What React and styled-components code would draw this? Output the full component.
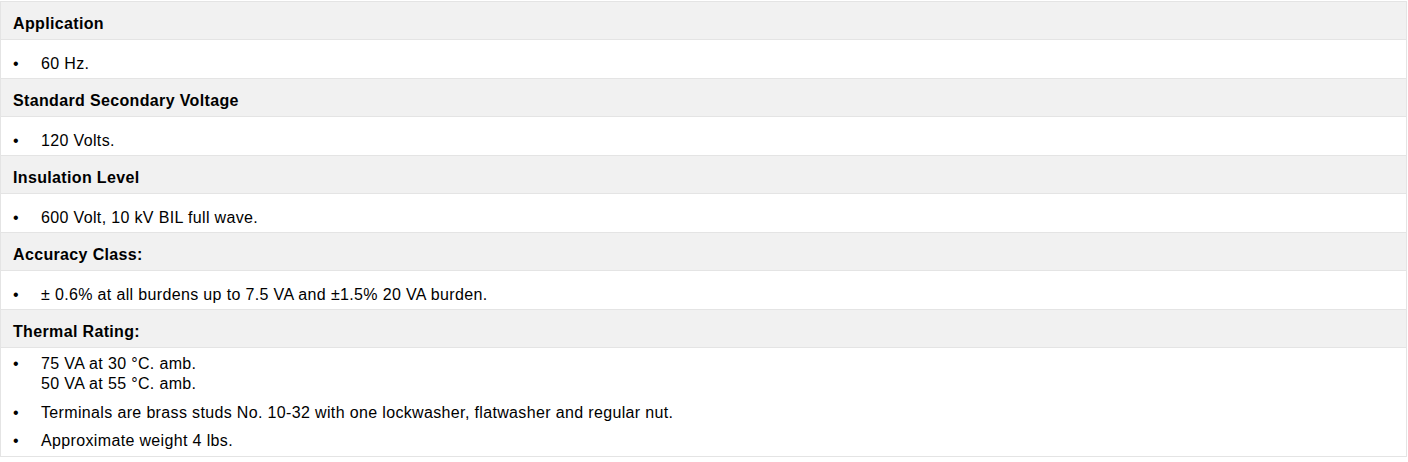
import styled, { createGlobalStyle } from "styled-components";

const GlobalStyle = createGlobalStyle`
  html, body {
    margin: 0;
    padding: 0;
    background: #fff;
  }
  body {
    font-family: "Liberation Sans", Arial, sans-serif;
    color: #000;
  }
`;

const SpecTable = styled.div`
  width: 1407px;
  margin-top: 1px;
  box-sizing: border-box;
  border: 1px solid #e4e4e4;
  border-bottom: 0;
  font-size: 16px;
  letter-spacing: 0.35px;
  line-height: 20px;
`;

const HeadRow = styled.div`
  box-sizing: border-box;
  height: 38px;
  padding: 12px 12px 0;
  background: #f1f1f1;
  border-bottom: 1px solid #e4e4e4;
  font-weight: 700;
`;

const BodyRow = styled.div`
  box-sizing: border-box;
  min-height: 39px;
  padding: ${(props) => (props.multi ? "6px 12px 5px" : "14px 12px 4px")};
  border-bottom: 1px solid #e4e4e4;
  background: #fff;
`;

const List = styled.ul`
  list-style: none;
  margin: 0;
  padding: 0;
  display: flex;
  flex-direction: column;
  gap: 8.5px;
`;

const Item = styled.li`
  position: relative;
  padding-left: 28px;
  &::before {
    content: "•";
    position: absolute;
    left: 0;
    top: 0;
  }
`;

const specs = [
  { title: "Application", items: [["60 Hz."]] },
  { title: "Standard Secondary Voltage", items: [["120 Volts."]] },
  { title: "Insulation Level", items: [["600 Volt, 10 kV BIL full wave."]] },
  {
    title: "Accuracy Class:",
    items: [["± 0.6% at all burdens up to 7.5 VA and ±1.5% 20 VA burden."]],
  },
  {
    title: "Thermal Rating:",
    items: [
      ["75 VA at 30 °C. amb.", "50 VA at 55 °C. amb."],
      ["Terminals are brass studs No. 10-32 with one lockwasher, flatwasher and regular nut."],
      ["Approximate weight 4 lbs."],
    ],
  },
];

export default function App() {
  return (
    <>
      <GlobalStyle />
      <SpecTable>
        {specs.map((spec) => (
          <div key={spec.title}>
            <HeadRow>{spec.title}</HeadRow>
            <BodyRow multi={spec.items.length > 1}>
              <List>
                {spec.items.map((lines, j) => (
                  <Item key={j}>
                    {lines.map((line, k) => (
                      <div key={k}>{line}</div>
                    ))}
                  </Item>
                ))}
              </List>
            </BodyRow>
          </div>
        ))}
      </SpecTable>
    </>
  );
}
